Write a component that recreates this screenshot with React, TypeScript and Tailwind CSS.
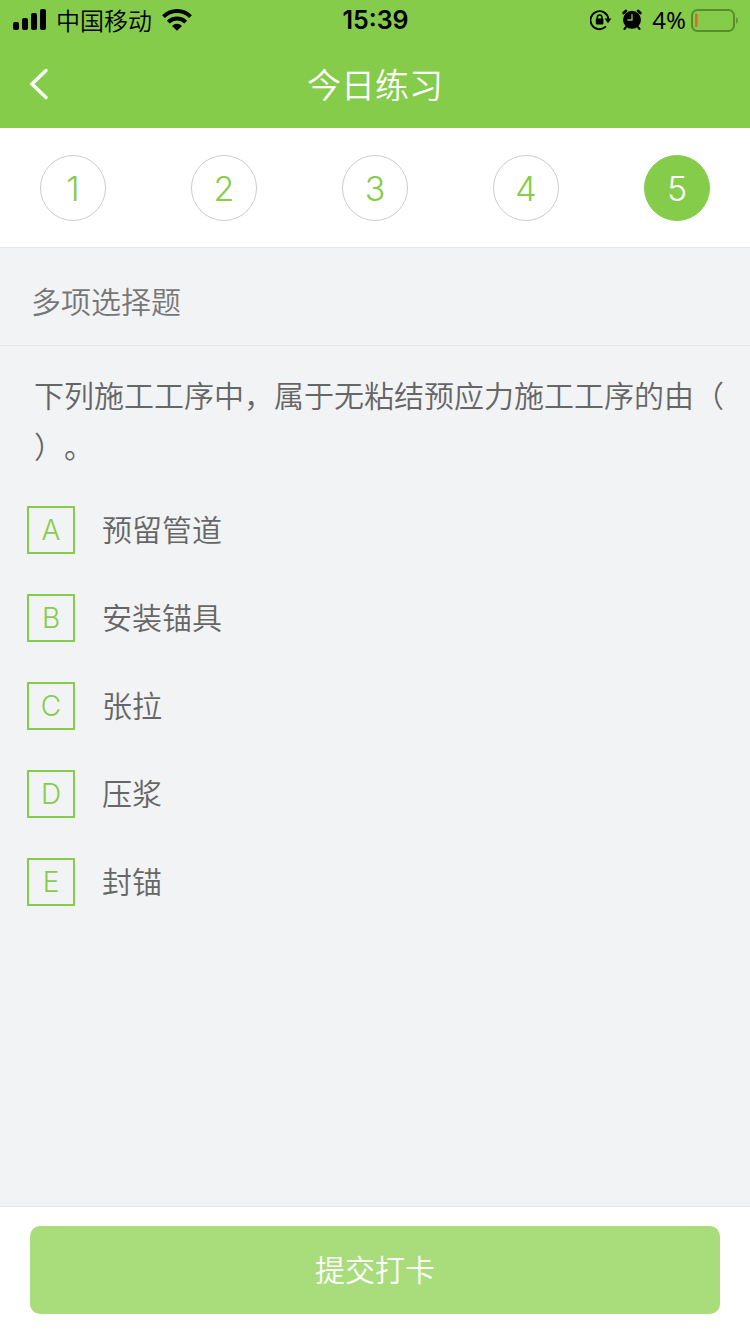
import { useState } from 'react';

const steps = [1, 2, 3, 4, 5];

const options = [
  { key: 'A', label: '预留管道' },
  { key: 'B', label: '安装锚具' },
  { key: 'C', label: '张拉' },
  { key: 'D', label: '压浆' },
  { key: 'E', label: '封锚' },
];

function SignalIcon() {
  return (
    <svg className="h-[22px] w-[33px]" viewBox="0 0 33 22" aria-hidden="true">
      <rect x="0" y="13" width="6" height="8" rx="2" />
      <rect x="9" y="9" width="6" height="12" rx="2" />
      <rect x="18" y="4" width="6" height="17" rx="2" />
      <rect x="27" y="0" width="6" height="21" rx="2" />
    </svg>
  );
}

function WifiIcon() {
  return (
    <svg className="h-[22px] w-[30px]" viewBox="0 0 30 22" aria-hidden="true">
      <g fill="none" stroke="currentColor" strokeWidth="4">
        <path d="M1.5 7.6a19.2 19.2 0 0 1 27 0" />
        <path d="M6.3 13.1a12.3 12.3 0 0 1 17.4 0" />
      </g>
      <path d="M15 21.8l-5-4.9a7.1 7.1 0 0 1 10 0z" />
    </svg>
  );
}

function RotationLockIcon() {
  return (
    <svg className="h-[22px] w-[22px]" viewBox="0 0 22 22" aria-hidden="true">
      <path
        d="M16 17.4a9 9 0 1 1 2.4-7.6"
        fill="none"
        stroke="currentColor"
        strokeWidth="1.9"
      />
      <path d="M14.6 9.4h6.8l-3.4 4.8z" />
      <rect x="5.8" y="9.6" width="7.6" height="5.8" rx="0.8" />
      <path d="M7.3 10V8.2a2.3 2.3 0 0 1 4.6 0V10" fill="none" stroke="currentColor" strokeWidth="1.5" />
    </svg>
  );
}

function AlarmIcon() {
  return (
    <svg className="h-[22px] w-5" viewBox="0 0 20 22" aria-hidden="true">
      <circle cx="10" cy="10.8" r="9" />
      <path
        d="M1.6 4l2.4-2.2M18.4 4l-2.4-2.2"
        stroke="currentColor"
        strokeWidth="2.6"
        strokeLinecap="round"
      />
      <path d="M4.4 17.6l-2 2.4M15.6 17.6l2 2.4" stroke="currentColor" strokeWidth="2" strokeLinecap="round" />
      <path d="M10 5.2v5.8H5.4" fill="none" stroke="#86cc4b" strokeWidth="1.3" />
    </svg>
  );
}

function BatteryIcon() {
  return (
    <svg className="h-[23px] w-12" viewBox="0 0 48 23" aria-hidden="true">
      <rect x="2" y="1" width="42" height="21" rx="5.5" fill="none" stroke="#558f2a" strokeWidth="2" />
      <path d="M46.2 8.3c2.2 1.2 2.2 5.2 0 6.4z" fill="#558f2a" />
      <rect x="5" y="4.5" width="2.6" height="13.5" rx="1.2" fill="#e8622c" />
    </svg>
  );
}

function StatusBar() {
  return (
    <div className="grid h-10 grid-cols-3 items-center pr-3 pl-[13px] text-2xl leading-8 text-black">
      <div className="flex items-center gap-2.5">
        <SignalIcon />
        <span className="font-['Noto_Sans_CJK_SC',sans-serif]">中国移动</span>
        <WifiIcon />
      </div>
      <span className="text-center text-[25px] leading-8 font-semibold">15:39</span>
      <div className="flex items-center justify-end gap-2.5">
        <RotationLockIcon />
        <AlarmIcon />
        <div className="flex items-center gap-1">
          <span className="font-['Noto_Sans',sans-serif] font-normal">4%</span>
          <BatteryIcon />
        </div>
      </div>
    </div>
  );
}

export default function App() {
  const [current, setCurrent] = useState(5);
  const [selected, setSelected] = useState<string[]>([]);

  const toggle = (key: string) => {
    setSelected((prev) => (prev.includes(key) ? prev.filter((k) => k !== key) : [...prev, key]));
  };

  return (
    <div className="flex min-h-screen flex-col bg-[#f2f3f5] font-['Inter','Noto_Sans_CJK_SC',sans-serif] text-[30px] font-[350] text-[#666]">
      <header className="bg-[#86cc4b] text-white">
        <StatusBar />
        <div className="grid h-[88px] grid-cols-[64px_1fr_64px] items-center">
          <button type="button" aria-label="返回" className="flex h-full items-center pl-[30px]">
            <svg className="h-8 w-[18px]" viewBox="0 0 18 32" fill="none" aria-hidden="true">
              <path d="M16 2.5L2 16l14 13.5" stroke="currentColor" strokeWidth="3.4" strokeLinecap="round" />
            </svg>
          </button>
          <h1 className="text-center font-['Noto_Sans_CJK_SC',sans-serif] text-[34px] leading-[52px] font-[350]">
            今日练习
          </h1>
        </div>
      </header>

      <nav className="flex justify-between border-b border-[#e6e7e8] bg-white px-10 pt-[27px] pb-[26px]">
        {steps.map((step) => (
          <button
            key={step}
            type="button"
            onClick={() => setCurrent(step)}
            className={`size-[66px] rounded-full border text-[34px] ${
              step === current
                ? 'border-[#86cc4b] bg-[#86cc4b] text-white'
                : 'border-[#ccc] bg-white text-[#86cc4b]'
            }`}
          >
            {step}
          </button>
        ))}
      </nav>

      <main className="flex-1">
        <h2 className="border-b border-[#e6e7e9] px-[31px] pt-8 pb-5 leading-[45px] font-[350] text-[#777]">
          多项选择题
        </h2>

        <p className="pt-[25px] pr-6 pl-[34px] leading-[51px] [line-break:anywhere] [text-spacing-trim:space-all]">
          下列施工工序中，属于无粘结预应力施工工序的由（）。
        </p>

        <div className="flex flex-col gap-10 px-[27px] pt-[33px] pb-10">
          {options.map(({ key, label }) => (
            <label key={key} className="flex items-center gap-[27px]">
              <span className="grid size-12 shrink-0 place-items-center">
                <input
                  type="checkbox"
                  checked={selected.includes(key)}
                  onChange={() => toggle(key)}
                  className="peer col-start-1 row-start-1 size-12 appearance-none border-2 border-[#86cc4b] checked:bg-[#86cc4b]"
                />
                <span className="col-start-1 row-start-1 text-[28px] leading-[48px] text-[#86cc4b] peer-checked:text-white">
                  {key}
                </span>
              </span>
              <span className="leading-[48px]">{label}</span>
            </label>
          ))}
        </div>
      </main>

      <footer className="border-t border-[#e6e7e9] bg-white px-[30px] pt-[19px] pb-5">
        <button type="button" className="h-[88px] w-full rounded-[10px] bg-[#a9dc7a] text-white">
          提交打卡
        </button>
      </footer>
    </div>
  );
}
